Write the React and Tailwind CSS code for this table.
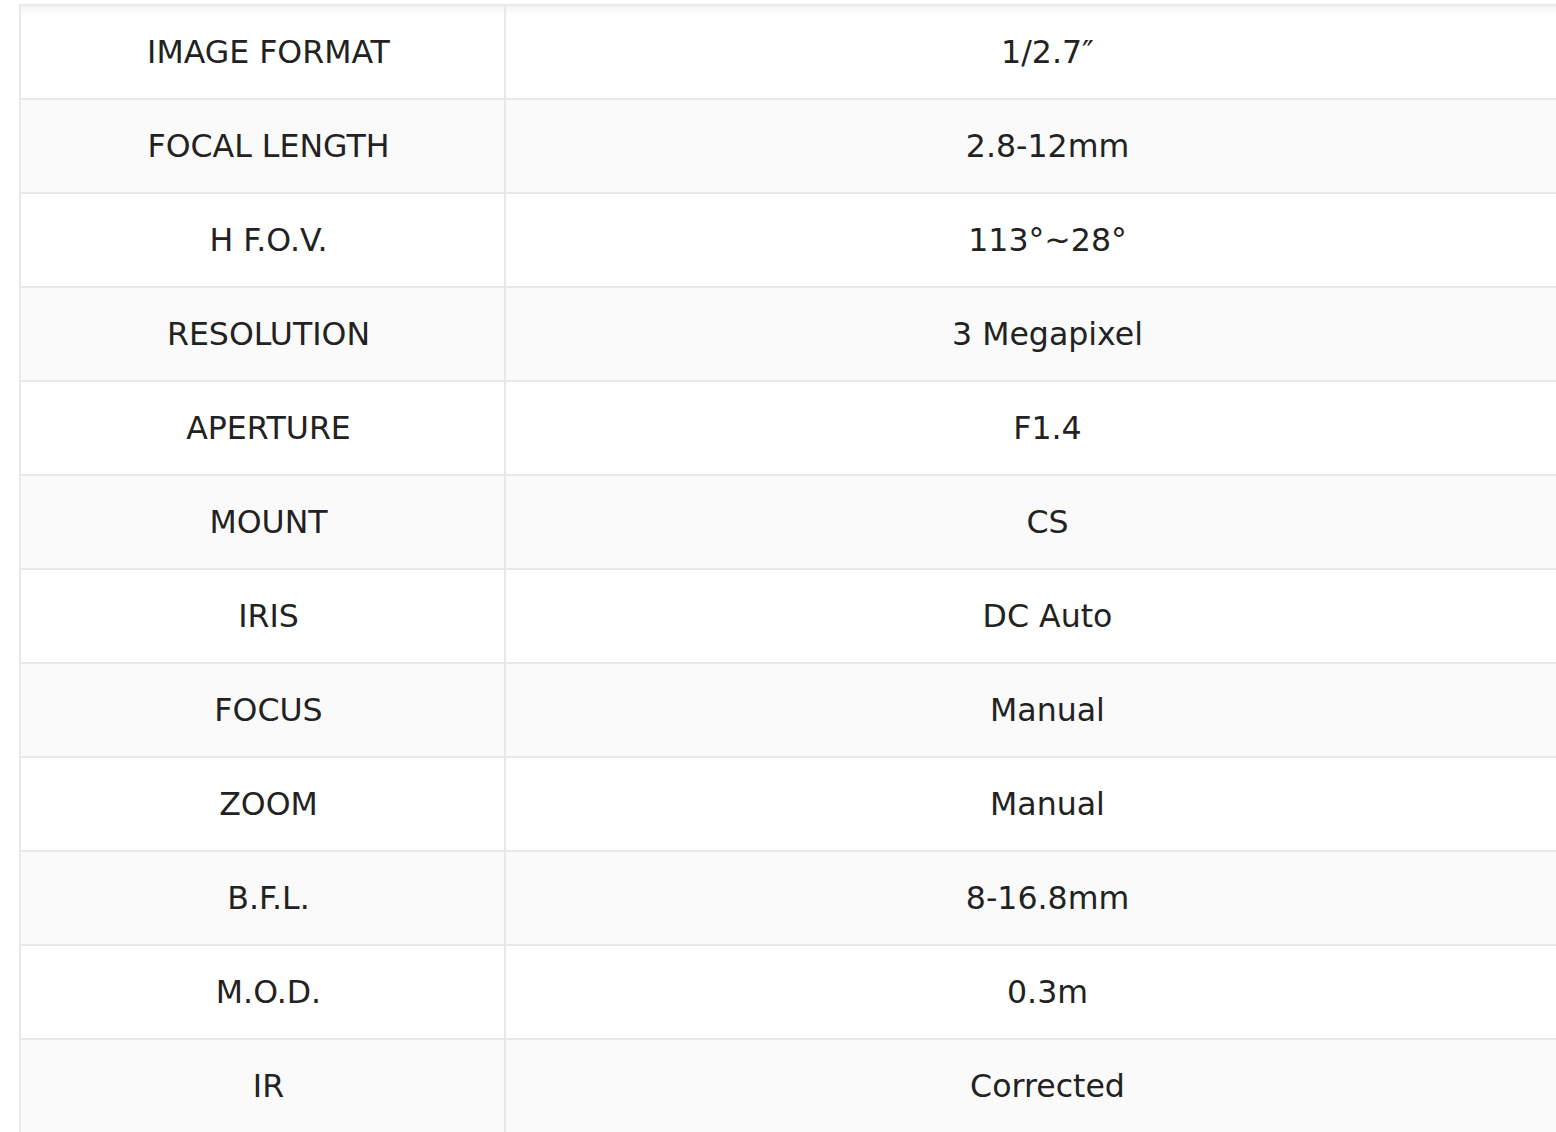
import React from "react";

const rows = [
  ["IMAGE FORMAT", "1/2.7\u2033"],
  ["FOCAL LENGTH", "2.8-12mm"],
  ["H F.O.V.", "113°~28°"],
  ["RESOLUTION", "3 Megapixel"],
  ["APERTURE", "F1.4"],
  ["MOUNT", "CS"],
  ["IRIS", "DC Auto"],
  ["FOCUS", "Manual"],
  ["ZOOM", "Manual"],
  ["B.F.L.", "8-16.8mm"],
  ["M.O.D.", "0.3m"],
  ["IR", "Corrected"],
];

export default function App() {
  return (
    <div className="w-[1556px] h-[1132px] overflow-hidden bg-white pt-[4px] pl-[19px]">
      <div
        className="w-[1570px] border-t-2 border-l-2 border-[#e8e8e8] text-[#222222] text-[31.6px] shadow-[inset_0_8px_8px_-6px_rgba(0,0,0,0.07)]"
        style={{ fontFamily: '"DejaVu Sans", Verdana, sans-serif' }}
      >
        {rows.map(([k, v], i) => (
          <div
            key={k}
            className={`flex h-[94px] border-b-2 border-[#e8e8e8] ${i % 2 === 1 ? "bg-[#fafafa]" : i === 0 ? "bg-transparent" : "bg-white"}`}
          >
            <div className="w-[485px] shrink-0 flex items-center justify-center pl-[12px] pt-[2px] border-r-2 border-[#e8e8e8] whitespace-nowrap">
              {k}
            </div>
            <div className="flex-1 flex items-center justify-center pt-[2px] whitespace-nowrap">
              {v}
            </div>
          </div>
        ))}
      </div>
    </div>
  );
}
